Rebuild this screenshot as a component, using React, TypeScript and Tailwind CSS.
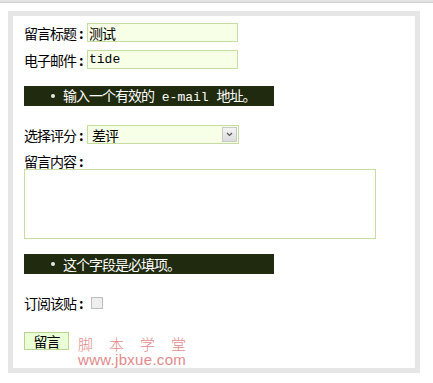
const cjk = { fontFamily: '"Noto Sans CJK SC", "Noto Sans", sans-serif' };
const mono = { fontFamily: '"Liberation Mono", "Noto Sans CJK SC", monospace', letterSpacing: 0, fontSize: 13 };

function Label({ text, width = "w-[63px]" }: { text: string; width?: string }) {
  return (
    <span className={`${width} leading-none`}>
      {text}
      <span className="ml-[3px] font-bold">:</span>
    </span>
  );
}

function ErrorBox({ children }: { children: React.ReactNode }) {
  return (
    <div className="flex h-[20px] w-[250px] items-center bg-[#1f2a0e] text-[14px] leading-[20px] tracking-[-1px] text-white">
      <span className="ml-[27px] mr-[8px] h-[4px] w-[4px] rounded-full bg-[#e8e8e8]" />
      <span>{children}</span>
    </div>
  );
}

export default function App() {
  return (
    <div className="h-[383px] w-[433px] bg-white text-[14px] tracking-[-1px] text-black" style={cjk}>
      <div className="h-[3px] w-full bg-[#e2e2e2] border-b border-[#d2d2d2]" />
      <div className="ml-[8px] mt-[8px] h-[362px] w-[412px] border-[5px] border-[#e6e6e6] pl-[11px] pt-[7px]">
        <div className="flex h-[19px] items-center">
          <Label text="留言标题" />
          <div className="flex h-[19px] w-[151px] items-center border border-[#c5dea0] bg-[#f7ffe6] pl-[1px] leading-none">
            测试
          </div>
        </div>

        <div className="mt-[8px] flex h-[19px] items-center">
          <Label text="电子邮件" />
          <div className="flex h-[19px] w-[151px] items-center border border-[#c5dea0] bg-[#f7ffe6] pl-[1px] leading-none" style={mono}>
            tide
          </div>
        </div>

        <div className="mt-[17px]">
          <ErrorBox>
            输入一个有效的<span style={mono}> e-mail </span>地址。
          </ErrorBox>
        </div>

        <div className="mt-[19px] flex h-[19px] items-center">
          <Label text="选择评分" />
          <div className="flex h-[19px] w-[152px] items-center justify-between border border-[#c5dea0] bg-[#f7ffe6] pl-[4px] pr-[1px] leading-none">
            <span>差评</span>
            <span className="flex h-[15px] w-[15px] items-center justify-center border border-[#c8c8c8] bg-gradient-to-b from-[#f4f4f4] to-[#dcdcdc]">
              <svg width="7" height="5" viewBox="0 0 7 5">
                <path d="M1 1 L3.5 3.5 L6 1" stroke="#555" strokeWidth="1.2" fill="none" />
              </svg>
            </span>
          </div>
        </div>

        <div className="mt-[9px] flex h-[16px] items-center">
          <Label text="留言内容" />
        </div>
        <div className="h-[70px] w-[352px] border border-[#c5dea0] bg-white" />

        <div className="mt-[15px]">
          <ErrorBox>这个字段是必填项。</ErrorBox>
        </div>

        <div className="mt-[21px] flex h-[16px] items-center">
          <Label text="订阅该贴" width="w-[67px]" />
          <span className="h-[12px] w-[12px] border border-[#bdbdbd] bg-[#eeeeee]" />
        </div>

        <div className="mt-[21px] flex items-start">
          <div className="flex h-[18px] w-[45px] items-center justify-center border border-[#b9d592] bg-[#eaffd6] leading-none">
            留言
          </div>
          <div className="ml-[9px] mt-[4px] flex w-[110px] flex-col tracking-normal text-[#e28a8a]">
            <div className="flex h-[16px] w-[108px] justify-between text-[15px] font-light leading-[16px]">
              <span>脚</span>
              <span>本</span>
              <span>学</span>
              <span>堂</span>
            </div>
            <div className="text-[15px] leading-[15px] tracking-[0.3px]" style={{ fontFamily: '"Liberation Sans", sans-serif' }}>
              www.jbxue.com
            </div>
          </div>
        </div>
      </div>
    </div>
  );
}
